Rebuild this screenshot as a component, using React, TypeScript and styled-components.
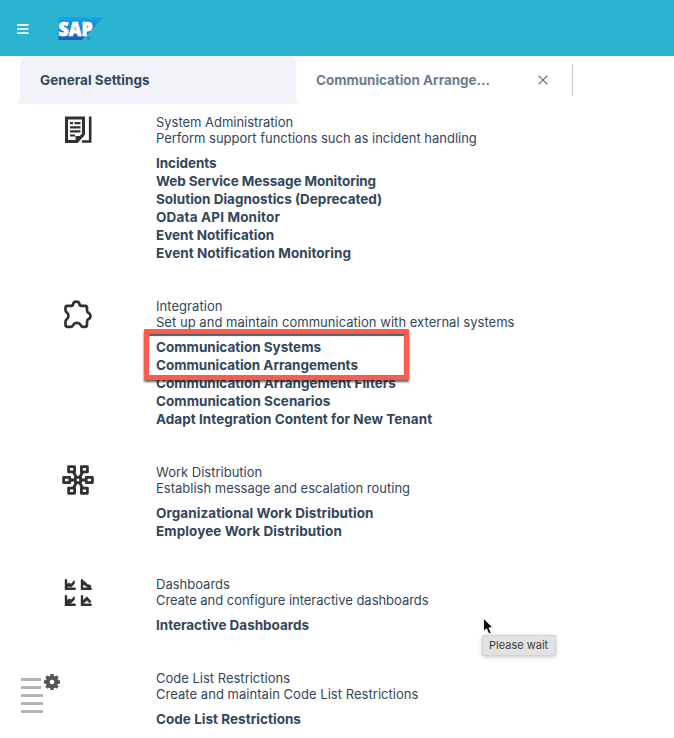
import React from 'react';
import styled, { createGlobalStyle } from 'styled-components';

const GlobalStyle = createGlobalStyle`
  * { box-sizing: border-box; }
  body {
    margin: 0;
    background: #fff;
    color: #32465c;
    font-family: Inter, "Liberation Sans", sans-serif;
    font-size: 13px;
  }
`;

const Page = styled.div`
  position: relative;
  height: 738px;
  overflow: hidden;
`;

const Header = styled.header`
  display: flex;
  align-items: center;
  height: 56px;
  padding-left: 17px;
  gap: 29px;
  background: #2cb5d0;
`;

const MenuIcon = styled.svg`
  width: 12px;
  height: 12px;
  margin-top: 2px;
`;

const Logo = styled.svg`
  width: 46px;
  height: 24px;
`;

const LogoText = styled.text`
  font-family: "Open Sans", "Liberation Sans", sans-serif;
  font-size: 19.5px;
  font-weight: 800;
  fill: #fff;
  stroke: #fff;
  stroke-width: 0.7px;
`;

const TabBar = styled.nav`
  display: flex;
  align-items: center;
  height: 48px;
  padding-left: 14px;
`;

const Flare = styled.span<{ $side: 'left' | 'right' }>`
  align-self: flex-end;
  width: 6px;
  height: 6px;
  margin-right: ${p => (p.$side === 'right' ? -6 : 0)}px;
  z-index: 1;
  background: radial-gradient(
    circle at ${p => (p.$side === 'left' ? '0 0' : '100% 0')},
    #fff 5.5px,
    #f2f3f8 6px
  );
`;

const Tracked = styled.span<{ $tracking: number }>`
  letter-spacing: ${p => p.$tracking}px;
  white-space: nowrap;
`;

const Tab = styled.div<{ $active?: boolean }>`
  display: flex;
  align-items: center;
  justify-content: space-between;
  width: ${p => (p.$active ? 276 : 252)}px;
  height: 48px;
  padding: 0 0 0 20px;
  border-radius: 7px 7px 0 0;
  background: ${p => (p.$active ? '#f2f3f8' : '#fff')};
  color: ${p => (p.$active ? '#32465c' : '#6b7e92')};
  font-size: 13.5px;
  font-weight: 700;
`;

const CloseIcon = styled.svg`
  width: 10px;
  height: 10px;
`;

const Divider = styled.span`
  width: 1px;
  height: 32px;
  margin-left: 24px;
  background: #c0c8cd;
`;

const Sections = styled.main`
  display: flex;
  flex-direction: column;
  gap: 36px;
  padding-top: 10px;
`;

const Section = styled.section`
  display: grid;
  grid-template-columns: 94px 1fr;
  padding-left: 62px;
`;

const SectionIcon = styled.svg`
  width: 32px;
  height: 32px;
  fill: none;
  stroke: #303134;
  stroke-width: 3;
`;

const Line = styled.div`
  height: 16px;
  line-height: 16px;
`;

const Links = styled.ul`
  margin: 8px 0 0;
  padding: 0;
  list-style: none;
`;

const LinkItem = styled.li`
  height: 18px;
  line-height: 18px;
  font-size: 13.5px;
  font-weight: 700;
`;

const Highlight = styled.div`
  position: absolute;
  left: 144px;
  top: 329px;
  width: 265px;
  height: 51px;
  border: 5px solid #fa5c50;
  box-shadow: 0 2px 2px rgba(45, 25, 25, 0.7), inset 0 2px 1px rgba(45, 65, 70, 0.85);
`;

const Pointer = styled.svg`
  position: absolute;
  left: 482px;
  top: 617px;
  width: 13px;
  height: 19px;
`;

const Tooltip = styled.div`
  position: absolute;
  left: 482px;
  top: 635px;
  width: 74px;
  height: 21px;
  padding-left: 6px;
  border: 1px solid #d2d2d3;
  border-radius: 2px;
  background: #e2e2e3;
  box-shadow: 0 1px 4px rgba(0, 0, 0, 0.22);
  color: #3c3c3e;
  font-size: 11px;
  line-height: 19px;
  white-space: nowrap;
`;

const ListSettings = styled.svg`
  position: absolute;
  left: 20px;
  top: 672px;
  width: 42px;
  height: 44px;
`;

type Entry = [text: string, tracking: number];

interface SectionData {
  icon: React.ReactNode;
  title: Entry;
  description: Entry;
  links: Entry[];
}

const documentIcon = (
  <>
    <path d="M4.5 4H21.5V20L15 27.5H4.5Z" />
    <path d="M13.5 29V22H22Z" fill="#303134" stroke="none" />
    <path d="M8 9.2H11M12.5 9.2H18.5M8 13.3H18.5M8 17.4H18.5M8 21.5H13" strokeWidth="2.2" />
    <path d="M28.2 2.5V27.5H20" strokeWidth="2.6" />
  </>
);

const puzzleIcon = (
  <path
    transform="translate(0 1.8)"
    d="M3.5 8Q3.5 6 5.5 6H9Q11 6 11.2 4Q11.8 1.8 14.3 1.8Q16.8 1.8 17.4 4Q17.6 6 19.6 6H23Q25 6 25 8V10.5Q25 12.4 26.7 13.2Q28.5 14 28.5 16.2Q28.5 18.4 26.7 19.2Q25 20 25 22V25Q25 27 23 27H21Q19.3 27 18.6 25.2Q17.5 23 14.9 23Q12.3 23 11.2 25.2Q10.5 27 8.8 27H5.5Q3.5 27 3.5 25V21.8Q3.5 20.4 4.7 19.5Q6.5 18.2 6.5 16Q6.5 13.8 4.7 12.6Q3.5 11.7 3.5 10.3Z"
    strokeWidth="2.7"
    strokeLinejoin="round"
  />
);

const networkIcon = (
  <>
    <path d="M9 16H23M11 7.5L21 24.5M21 7.5L11 24.5" strokeWidth="2.8" />
    <g fill="#fff" strokeWidth="2.8" strokeLinejoin="round">
      <rect x="6.6" y="2.7" width="6" height="5.2" />
      <rect x="19.4" y="2.7" width="6" height="5.2" />
      <rect x="1.6" y="13.4" width="6.2" height="5.2" />
      <rect x="24.2" y="13.4" width="6.2" height="5.2" />
      <rect x="6.6" y="24.1" width="6" height="5.2" />
      <rect x="19.4" y="24.1" width="6" height="5.2" />
      <rect x="13.4" y="13.4" width="5.2" height="5.2" />
    </g>
  </>
);

const chartsIcon = (
  <>
    <g strokeWidth="2.4" strokeLinecap="round">
      <path d="M4 4.2V12.7H12.7M20 4.2V12.7H28.7M4 20.2V28.7H12.7M20 20.2V28.7H28.7" />
    </g>
    <g fill="#303134" stroke="#303134" strokeWidth="0.7" strokeLinejoin="round">
      <path d="M4 9L7 7L9 8.2L12.3 4.5V7.8L9 11.3L7 10L4 12Z" />
      <path d="M20 4.6L23 5.8L25 8.2L28.7 9.5V11.5H26L22.5 9L20 8.5Z" />
      <path d="M4 25L7 23L9 23.8L12.3 20.5V23.8L9 27L4 28.5Z" />
      <path d="M20 25.5L25 20.8L29 25.4L27.6 27L25 24.3L20 28.5Z" />
    </g>
  </>
);

const sections: SectionData[] = [
  {
    icon: documentIcon,
    title: ['System Administration', -0.03],
    description: ['Perform support functions such as incident handling', -0.02],
    links: [
      ['Incidents', -0.07],
      ['Web Service Message Monitoring', -0.07],
      ['Solution Diagnostics (Deprecated)', 0],
      ['OData API Monitor', 0.16],
      ['Event Notification', 0],
      ['Event Notification Monitoring', 0.05],
    ],
  },
  {
    icon: puzzleIcon,
    title: ['Integration', 0.05],
    description: ['Set up and maintain communication with external systems', 0.03],
    links: [
      ['Communication Systems', 0],
      ['Communication Arrangements', -0.03],
      ['Communication Arrangement Filters', 0],
      ['Communication Scenarios', 0.02],
      ['Adapt Integration Content for New Tenant', 0.04],
    ],
  },
  {
    icon: networkIcon,
    title: ['Work Distribution', 0],
    description: ['Establish message and escalation routing', 0],
    links: [
      ['Organizational Work Distribution', 0.07],
      ['Employee Work Distribution', 0.09],
    ],
  },
  {
    icon: chartsIcon,
    title: ['Dashboards', 0],
    description: ['Create and configure interactive dashboards', -0.03],
    links: [['Interactive Dashboards', -0.02]],
  },
  {
    icon: null,
    title: ['Code List Restrictions', 0],
    description: ['Create and maintain Code List Restrictions', 0.04],
    links: [['Code List Restrictions', 0.03]],
  },
];

const Label = ({ entry: [text, tracking] }: { entry: Entry }) => (
  <Tracked $tracking={tracking}>{text}</Tracked>
);

export default function App() {
  return (
    <Page>
      <GlobalStyle />
      <Header>
        <MenuIcon viewBox="0 0 12 12">
          <path d="M0 1.9H11.5M0 6H11.5M0 10.1H11.5" stroke="#fff" strokeWidth="1.7" />
        </MenuIcon>
        <Logo viewBox="0 0 46 24">
          <defs>
            <linearGradient id="sapBlue" x1="0" y1="0" x2="0" y2="1">
              <stop offset="0" stopColor="#12a9ea" />
              <stop offset="1" stopColor="#2059bd" />
            </linearGradient>
          </defs>
          <path d="M0.5 1H46L24 24H0.5Z" fill="url(#sapBlue)" />
          <LogoText x="0.6" y="19.6" textLength="34" lengthAdjust="spacingAndGlyphs">SAP</LogoText>
          <circle cx="30.7" cy="22.2" r="1.2" fill="none" stroke="#2373bd" strokeWidth="0.8" />
        </Logo>
      </Header>
      <TabBar>
        <Flare $side="left" />
        <Tab $active>
          <Label entry={['General Settings', 0.03]} />
        </Tab>
        <Flare $side="right" />
        <Tab>
          <Label entry={['Communication Arrange...', -0.05]} />
          <CloseIcon viewBox="0 0 10 10">
            <path d="M0.6 0.6L9.4 9.4M9.4 0.6L0.6 9.4" stroke="#5c7084" strokeWidth="1.3" />
          </CloseIcon>
        </Tab>
        <Divider />
      </TabBar>
      <Sections>
        {sections.map(({ icon, title, description, links }) => (
          <Section key={title[0]}>
            <SectionIcon viewBox="0 0 32 32">{icon}</SectionIcon>
            <div>
              <Line><Label entry={title} /></Line>
              <Line><Label entry={description} /></Line>
              <Links>
                {links.map(link => (
                  <LinkItem key={link[0]}><Label entry={link} /></LinkItem>
                ))}
              </Links>
            </div>
          </Section>
        ))}
      </Sections>
      <Highlight />
      <ListSettings viewBox="0 0 42 44">
        <path d="M1 7.5H21M1 15.5H21M1 23.5H23M1 31.5H23M1 39.5H23" stroke="#b5b5b5" strokeWidth="3" />
        <g transform="translate(32 10)">
          <circle r="4.3" fill="none" stroke="#555" strokeWidth="4" />
          <path
            d="M0 -8V-5M0 8V5M-8 0H-5M8 0H5M-5.6 -5.6L-3.7 -3.7M5.6 5.6L3.7 3.7M-5.6 5.6L-3.7 3.7M5.6 -5.6L3.7 -3.7"
            stroke="#555"
            strokeWidth="3.4"
          />
        </g>
      </ListSettings>
      <Tooltip>Please wait</Tooltip>
      <Pointer viewBox="0 0 13 19">
        <path
          d="M1.5 1.2V14.5L4.5 11.7L6.8 17L9.2 16L7 10.8H11Z"
          fill="#080808"
          stroke="#fff"
          strokeWidth="0.9"
        />
      </Pointer>
    </Page>
  );
}
